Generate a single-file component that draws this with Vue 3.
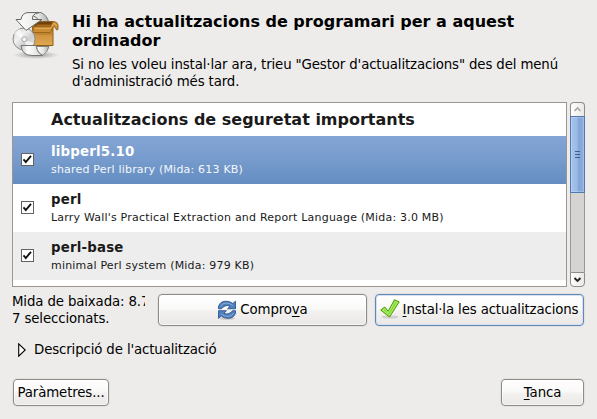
<script setup>
import { ref } from 'vue'

const updates = ref([
  { name: 'libperl5.10', info: 'shared Perl library (Mida: 613 KB)', checked: true },
  { name: 'perl', info: "Larry Wall's Practical Extraction and Report Language (Mida: 3.0 MB)", checked: true },
  { name: 'perl-base', info: 'minimal Perl system (Mida: 979 KB)', checked: true },
])
const selected = ref(0)
</script>

<template>
  <main class="dialog">
    <header class="intro">
      <svg class="app-icon" width="48" height="50" viewBox="0 0 48 50">
        <defs>
          <linearGradient id="paper" x1="0" x2="1"><stop offset="0" stop-color="#fff" /><stop offset=".55" stop-color="#e4e5e2" /><stop offset="1" stop-color="#aaaca8" /></linearGradient>
          <linearGradient id="arrow" x1="0" x2="1"><stop offset="0" stop-color="#fff" /><stop offset="1" stop-color="#e6e7e4" /></linearGradient>
          <linearGradient id="paperLow" x1="0" x2="1"><stop offset="0" stop-color="#c4c6c2" /><stop offset=".3" stop-color="#fff" /><stop offset="1" stop-color="#d5d7d3" /></linearGradient>
          <linearGradient id="box" x1="0" x2="0" y1="0" y2="1"><stop offset="0" stop-color="#bd7d25" /><stop offset="1" stop-color="#e0a751" /></linearGradient>
          <linearGradient id="disc" x1="0" y1="0" x2="1" y2="1"><stop offset="0" stop-color="#c4c4c4" /><stop offset=".35" stop-color="#f2f2f2" /><stop offset=".6" stop-color="#cfcfcf" /><stop offset="1" stop-color="#e8e8e8" /></linearGradient>
          <radialGradient id="floor"><stop offset="0" stop-color="#000" stop-opacity=".35" /><stop offset="1" stop-color="#000" stop-opacity="0" /></radialGradient>
        </defs>
        <ellipse cx="24" cy="43" rx="23" ry="4" fill="url(#floor)" />
        <path d="M15 .6H29Q35 3 37 11H28Q26 5 20 3Z" fill="url(#paper)" stroke="#747672" />
        <path d="M20 10H41V33.500H22Z" fill="url(#box)" stroke="#8f5d14" />
        <path d="M24 9.500H41L39 15H22Z" fill="#6d420c" stroke="#96611a" stroke-width=".8" />
        <path d="M25 12.500H39.500L38.500 15H23Z" fill="#a8691b" />
        <path d="M41 9.500Q45.500 9.500 46 13V17.500L44.500 18Q43.500 14 41 14.500L38.500 20.500H21V15H38.500Z" fill="#cb8c34" stroke="#96611a" stroke-width=".9" />
        <path d="M23 16.200H39L41.500 11.500Q44 11 44.500 14" fill="none" stroke="#e9b869" />
        <path d="M23 22H40" fill="none" stroke="#9a6218" opacity=".5" />
        <circle cx="12" cy="27" r="11" fill="url(#disc)" stroke="#8d8d8d" />
        <path d="M12 27 2 22Q4 18 8 17ZM12 28 22 31Q20 36 16 37Z" fill="#fff" opacity=".65" />
        <circle cx="12.300" cy="27.300" r="2.600" fill="#e5e5e5" stroke="#a5a5a5" stroke-width=".8" />
        <circle cx="12.300" cy="27.300" r="1" fill="#fff" />
        <path d="M9 7.500Q10 1 16 .6H27Q19.500 2 20.500 7.500H30L14 18.500 4 7.500Z" fill="url(#arrow)" stroke="#666864" />
        <path d="M9 33.500H24Q25 41 31 43.500H20Q9.500 43 9 33.500Z" fill="url(#paperLow)" stroke="#747672" />
        <path d="M24.500 34.500H37Q35.500 40 31 43.300Q25.500 41 24.500 34.500Z" fill="url(#paper)" stroke="#838581" />
      </svg>
      <div class="intro-text">
        <h1>Hi ha actualitzacions de programari per a aquest<br />ordinador</h1>
        <p>Si no les voleu instal·lar ara, trieu "Gestor d'actualitzacions" des del menú<br />d'administració més tard.</p>
      </div>
    </header>

    <section class="scroller">
      <div class="list">
        <h2>Actualitzacions de seguretat importants</h2>
        <div v-for="(item, i) in updates" :key="item.name" class="row" :class="{ selected: i === selected }" @click="selected = i">
          <span class="check" role="checkbox" :aria-checked="item.checked" @click.stop="item.checked = !item.checked">
            <svg v-if="item.checked" width="11" height="11" viewBox="0 0 11 11"><path d="M1.500 5.300 3.800 8 9 1.800" fill="none" stroke="#111" stroke-width="1.900" /></svg>
          </span>
          <div class="row-text">
            <strong>{{ item.name }}</strong>
            <span>{{ item.info }}</span>
          </div>
        </div>
      </div>
      <div class="scrollbar">
        <div class="step up"><svg width="9" height="7" viewBox="0 0 9 7"><path d="M1.500 5 4.500 2 7.500 5" fill="none" stroke="#aaa9a7" stroke-width="1.700" /></svg></div>
        <div class="thumb"><i></i><i></i><i></i></div>
        <div class="trough"></div>
        <div class="step down"><svg width="9" height="7" viewBox="0 0 9 7"><path d="M1.500 2 4.500 5 7.500 2" fill="none" stroke="#222" stroke-width="1.900" /></svg></div>
      </div>
    </section>

    <section class="actions">
      <div class="summary">Mida de baixada: 8.7<br />7 seleccionats.</div>
      <button class="btn wide">
        <svg class="refresh" width="20" height="20" viewBox="0 0 20 20">
          <ellipse cx="10" cy="18.500" rx="8" ry="1.500" fill="#000" opacity=".14" />
          <path d="M1.500 8.800V6.500Q3 1.200 9 1.200Q13 1.200 15.800 3.500L18.500 1.200V8.800H10.500L13 6.400Q10.500 4.800 8 6Q5.500 7 4.500 8.800Z" fill="#4f7fbd" stroke="#204a87" stroke-width=".8" />
          <path d="M18.500 10.700V13Q17 18.300 11 18.300Q7 18.300 4.200 16L1.500 18.300V10.700H9.500L7 13.100Q9.500 14.700 12 13.500Q14.500 12.500 15.500 10.700Z" fill="#4f7fbd" stroke="#204a87" stroke-width=".8" />
          <path d="M3.300 6.500Q5 3 9.500 3Q13 3.200 15.800 5.500M16.700 13Q15 16.500 10.500 16.500Q7 16.300 4.200 14" fill="none" stroke="#8fb2dc" stroke-width=".9" />
        </svg>
        <span>Compro<u>v</u>a</span>
      </button>
      <button class="btn wide primary">
        <svg class="tick" width="20" height="20" viewBox="0 0 20 20">
          <ellipse cx="10" cy="18" rx="8.500" ry="1.600" fill="#000" opacity=".13" />
          <path d="M.7 11 4.800 8 8.200 12.200 14.500 .7 19.200 2.900 9.500 18Z" fill="#7fdb2f" stroke="#4e9a06" stroke-linejoin="round" />
          <path d="M2.600 11.200 4.700 9.600 8.300 14 15 2.500 17.500 3.500 9.300 16.200Z" fill="none" stroke="#b5ee7c" />
        </svg>
        <span><u>I</u>nstal·la les actualitzacions</span>
      </button>
    </section>

    <div class="expander">
      <svg width="8" height="14" viewBox="0 0 8 14"><path d="M.7 .8 7.200 7 .7 13.200Z" fill="#fff" stroke="#000" stroke-width="1.100" /></svg>
      <span>Descripció de l'actualització</span>
    </div>

    <footer>
      <button class="btn params"><span>Paràmetres...</span></button>
      <button class="btn close"><span><u>T</u>anca</span></button>
    </footer>
  </main>
</template>

<style>
body { background: #edeceb; }
</style>

<style scoped>
* { box-sizing: border-box; }
.dialog {
  width: 597px;
  height: 419px;
  padding: 11px 12px 12px;
  overflow: hidden;
  display: flex;
  flex-direction: column;
  background: #edeceb;
  color: #000;
  font: 13.33px/17px "DejaVu Sans", sans-serif;
  letter-spacing: -.13px;
}
.intro { height: 91px; display: flex; gap: 12px; flex: none; }
.app-icon { flex: none; margin-top: 1px; }
.intro-text { white-space: nowrap; padding-top: 1px; }
h1 { margin: 0; font: bold 16px/19px "DejaVu Sans", sans-serif; letter-spacing: 0; }
.intro p { margin: 6px 0 0; }
.scroller { display: flex; height: 185px; gap: 3px; flex: none; }
.list {
  width: 555px;
  border: 1px solid #9b9691;
  background: #fff;
  color: #1a1a1a;
  overflow: hidden;
}
h2 { margin: 0; height: 33px; padding: 0 0 0 38px; font: bold 16px/33px "DejaVu Sans", sans-serif; letter-spacing: 0; }
.row { height: 48px; display: flex; align-items: flex-start; padding-left: 8px; }
.row:nth-child(4) { background: #ededed; }
.row.selected { background: linear-gradient(#83a5d6, #769bcc 50%, #648dc2); color: #fff; }
.check { width: 13px; height: 13px; margin-top: 17px; border: 1px solid #66625f; background: #fff; display: flex; flex: none; }
.row-text { margin-left: 17px; padding-top: 7px; display: flex; flex-direction: column; white-space: nowrap; }
.row-text strong { font: bold 13.33px/17px "DejaVu Sans", sans-serif; letter-spacing: .2px; }
.row-text span { font: 11px/14px "DejaVu Sans", sans-serif; letter-spacing: .2px; margin-top: 3px; }
.selected span { color: #f4f7fb; }
.scrollbar { width: 15px; display: flex; flex-direction: column; }
.step { display: flex; align-items: center; justify-content: center; border: 1px solid #8f8b87; background: linear-gradient(90deg, #fff, #e9e8e6); flex: none; }
.up { height: 14px; border-bottom: 0; border-radius: 4px 4px 0 0; }
.down { height: 15px; border-radius: 0 0 4px 4px; }
.thumb {
  height: 77px;
  border: 1px solid #5079b0;
  background: linear-gradient(90deg, #a6c3ea, #9bbbe6 45%, #83a6d8 60%, #8baede);
  box-shadow: inset 0 0 0 1px #ffffff38;
  display: flex; flex-direction: column; align-items: center; justify-content: center; gap: 2px;
}
.thumb i { width: 5px; height: 1px; background: #3c5f94; }
.trough { flex: 1; background: #d5d4d2; border: solid #9b9691; border-width: 0 1px; }
.actions { display: flex; margin-top: 6px; height: 34px; flex: none; }
.summary { width: 133px; margin-right: 13px; overflow: hidden; white-space: nowrap; }
.btn {
  margin: 0;
  padding: 0;
  border: 1px solid #8f8b87;
  border-radius: 4px;
  background: linear-gradient(#fff, #f9f9f8 48%, #f3f2f1 52%, #e9e8e6);
  box-shadow: inset 0 0 0 1px #ffffff90, 0 0 0 1px #0000000b;
  font: inherit;
  letter-spacing: inherit;
  color: #000;
  display: flex;
  align-items: center;
  justify-content: center;
  white-space: nowrap;
}
.wide { width: 209px; height: 32px; margin-top: 1px; gap: 3px; }
.wide span { position: relative; top: -1px; }
.primary { margin-left: 8px; border-color: #6387b8; box-shadow: inset 0 0 0 1px #d5e1f1, 0 0 0 1px #0000000b; gap: 3px; }
.tick { margin-left: -1px; margin-top: -2px; }
u { text-decoration: underline; text-underline-offset: 2px; text-decoration-thickness: 1px; text-decoration-skip-ink: none; }
.expander { display: flex; align-items: center; gap: 8px; height: 17px; margin-top: 14px; padding-left: 6px; flex: none; }
footer { display: flex; justify-content: space-between; padding: 0 1px; margin-top: 21px; }
.params { width: 96px; height: 27px; }
.close { width: 83px; height: 27px; }
</style>
